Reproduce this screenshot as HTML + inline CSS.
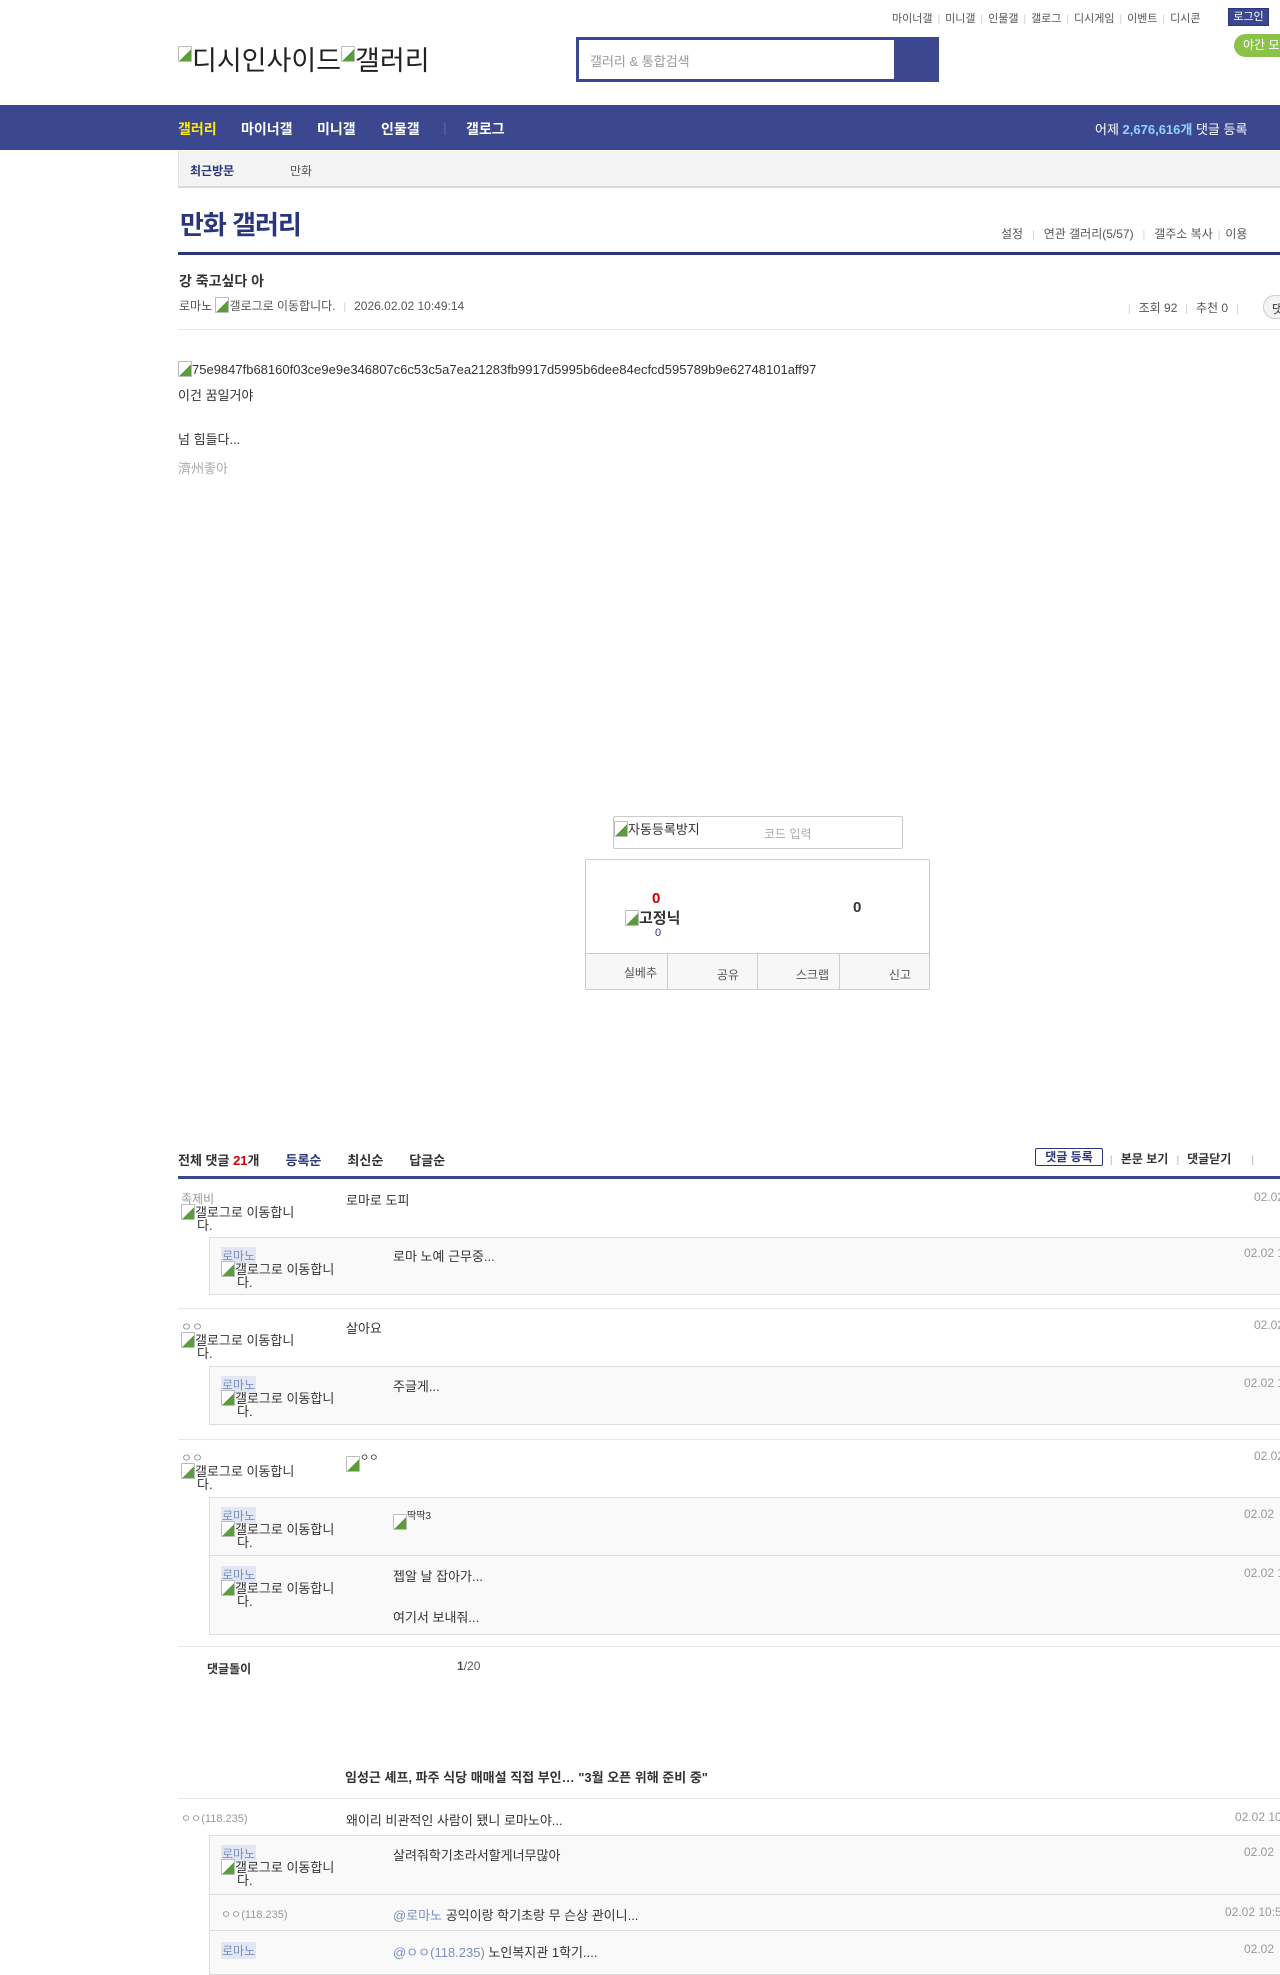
<!DOCTYPE html>
<html><head><meta charset="utf-8"><style>
*{margin:0;padding:0;box-sizing:border-box}
body{width:1280px;height:1958px;overflow:hidden;background:#fff;font-family:"Liberation Sans","Noto Sans CJK KR",sans-serif;font-size:13px;color:#333;position:relative}
.a{position:absolute;white-space:nowrap}
.bi{display:inline-block;width:14px;height:16px;border:1px solid #bbb;border-radius:1px;vertical-align:-3px;background:linear-gradient(135deg,#fff 55%,#5a9d3a 55%)}
.alt{position:absolute;width:130px;white-space:normal;font-size:13px;line-height:12px;color:#333}
.nk{font-size:12px;color:#999}
.nkr{font-size:12px;color:#7b8fbf;background:#e3e7f4;padding:0 1px}
.dt{font-size:12px;color:#999}
.box{position:absolute;left:209px;width:1100px;background:#f9f9f9;border:1px solid #ddd}
.hl{position:absolute;left:178px;width:1110px;height:1px;background:#e6e6e6}
.sep{color:#ccc;margin:0 5px;font-size:10px}
.nv{position:absolute;top:119px;font-size:14px;font-weight:bold;color:#fff;white-space:nowrap}
</style></head><body>

<div class="a" style="left:892px;top:10px;font-size:11px;color:#555">마이너갤<span class="sep">|</span>미니갤<span class="sep">|</span>인물갤<span class="sep">|</span>갤로그<span class="sep">|</span>디시게임<span class="sep">|</span>이벤트<span class="sep">|</span>디시콘</div>
<div class="a" style="left:1228px;top:8px;width:41px;height:18px;background:#3b4890;border:1px solid #29367c;color:#fff;font-size:11px;text-align:center;line-height:16px">로그인</div>
<div class="a" style="left:1234px;top:34px;width:60px;height:23px;background:#8bc34a;border-radius:12px;color:#fff;font-size:12px;line-height:23px;padding-left:9px">야간 모드</div>

<div class="a" style="left:178px;top:39px;font-size:27px;color:#222;letter-spacing:0"><span class="bi" style="vertical-align:8px"></span>디시인사이드<span class="bi" style="vertical-align:8px"></span>갤러리</div>

<div class="a" style="left:576px;top:37px;width:363px;height:45px;background:#3b4890"></div>
<div class="a" style="left:579px;top:40px;width:315px;height:39px;background:#fff"></div>
<div class="a" style="left:590px;top:51px;font-size:13px;color:#999">갤러리 &amp; 통합검색</div>

<div class="a" style="left:0;top:105px;width:1280px;height:45px;background:#3b4890"></div>
<div class="nv" style="left:178px;color:#ffea00">갤러리</div>
<div class="nv" style="left:241px">마이너갤</div>
<div class="nv" style="left:317px">미니갤</div>
<div class="nv" style="left:381px">인물갤</div>
<div class="nv" style="left:443px;color:#5a66a8;font-weight:normal">|</div>
<div class="nv" style="left:466px">갤로그</div>
<div class="a" style="left:1095px;top:119px;font-size:13px;color:#fff">어제 <b style="color:#8fd3fe">2,676,616개</b> 댓글 등록</div>

<div class="a" style="left:178px;top:151px;width:1110px;height:37px;background:#f3f3f3;border-left:1px solid #e4e4e4;border-bottom:2px solid #d9d9d9"></div>
<div class="a" style="left:190px;top:162px;font-size:12px;font-weight:bold;color:#29367c">최근방문</div>
<div class="a" style="left:290px;top:162px;font-size:12px;color:#555">만화</div>

<div class="a" style="left:180px;top:205px;font-size:26px;color:#29367c;font-weight:bold;letter-spacing:-1px">만화 갤러리</div>
<div class="a" style="left:1001px;top:225px;font-size:12px;color:#555">설정<span class="sep" style="margin:0 9px">|</span>연관 갤러리(5/57)<span class="sep" style="margin:0 9px">|</span>갤주소 복사<span class="sep">|</span>이용</div>
<div class="a" style="left:178px;top:252px;width:1110px;height:3px;background:#29367c"></div>

<div class="a" style="left:179px;top:271px;font-size:14px;font-weight:bold;color:#333">강 죽고싶다 아</div>
<div class="a" style="left:179px;top:297px;font-size:12px;color:#555">로마노 <span class="bi"></span>갤로그로 이동합니다.<span class="sep" style="margin:0 8px">|</span>2026.02.02 10:49:14</div>
<div class="a" style="left:1128px;top:299px;font-size:12px;color:#555"><span class="sep" style="margin:0 8px 0 0">|</span>조회 92<span class="sep" style="margin:0 8px">|</span>추천 0<span class="sep" style="margin:0 8px">|</span></div>
<div class="a" style="left:1263px;top:295px;width:40px;height:24px;border:1px solid #ccc;border-radius:12px;background:#f3f3f3;font-size:12px;padding:4px 8px">댓글</div>
<div class="hl" style="top:329px"></div>

<div class="a" style="left:178px;top:361px;font-size:13px;color:#333"><span class="bi"></span>75e9847fb68160f03ce9e9e346807c6c53c5a7ea21283fb9917d5995b6dee84ecfcd595789b9e62748101aff97</div>
<div class="a" style="left:178px;top:385px">이건 꿈일거야</div>
<div class="a" style="left:178px;top:429px">넘 힘들다...</div>
<div class="a" style="left:178px;top:458px;color:#aaa">濟州좋아</div>

<div class="a" style="left:613px;top:816px;width:290px;height:33px;border:1px solid #ccc;border-radius:2px"></div>
<div class="a" style="left:614px;top:819px;font-size:13px"><span class="bi"></span>자동등록방지</div>
<div class="a" style="left:764px;top:825px;font-size:12px;color:#aaa">코드 입력</div>

<div class="a" style="left:585px;top:859px;width:345px;height:131px;border:1px solid #ccc;border-radius:2px"></div>
<div class="a" style="left:652px;top:890px;font-size:15px;font-weight:bold;color:#c00">0</div>
<div class="a" style="left:625px;top:907px;font-size:15px;font-weight:bold;color:#333"><span class="bi"></span>고정닉</div>
<div class="a" style="left:655px;top:927px;font-size:11px;color:#29367c">0</div>
<div class="a" style="left:853px;top:899px;font-size:15px;font-weight:bold;color:#333">0</div>
<div class="a" style="left:586px;top:953px;width:343px;height:36px;background:#f7f7f7;border-top:1px solid #ccc;display:flex">
<div style="flex:1;border-right:1px solid #ccc;font-size:12px;text-align:right;padding:10px 10px 0 0;color:#555">실베추</div>
<div style="flex:1;border-right:1px solid #ccc;font-size:12px;text-align:right;padding:12px 18px 0 0;color:#555">공유</div>
<div style="flex:1;border-right:1px solid #ccc;font-size:12px;text-align:right;padding:12px 10px 0 0;color:#555">스크랩</div>
<div style="flex:1;font-size:12px;text-align:right;padding:12px 18px 0 0;color:#555">신고</div>
</div>

<div class="a" style="left:178px;top:1150px;font-size:13px;font-weight:bold;color:#333">전체 댓글 <span style="color:#c00">21</span>개<span style="color:#29367c;margin-left:26px">등록순</span><span style="margin-left:26px">최신순</span><span style="margin-left:26px">답글순</span></div>
<div class="a" style="left:1035px;top:1148px;width:68px;height:18px;border:1px solid #29367c;border-radius:2px;font-size:12px;font-weight:bold;color:#29367c;text-align:center;line-height:16px">댓글 등록</div>
<div class="a" style="left:1110px;top:1150px;font-size:12px;font-weight:bold;color:#333"><span class="sep" style="margin:0 8px 0 0">|</span>본문 보기<span class="sep" style="margin:0 8px">|</span>댓글닫기<span class="sep" style="margin:0 0 0 20px">|</span></div>
<div class="a" style="left:178px;top:1176px;width:1110px;height:3px;background:#3b4890"></div>

<div class="a nk" style="left:181px;top:1190px">족제비</div>
<div class="alt" style="left:181px;top:1204px"><span class="bi"></span>갤로그로 이동합니<br><span style="padding-left:16px">다.</span></div>
<div class="a" style="left:346px;top:1190px">로마로 도피</div>
<div class="a dt" style="left:1254px;top:1190px">02.02</div>
<div class="box" style="top:1237px;height:58px"></div>
<div class="a nkr" style="left:221px;top:1247px">로마노</div>
<div class="alt" style="left:221px;top:1261px"><span class="bi"></span>갤로그로 이동합니<br><span style="padding-left:16px">다.</span></div>
<div class="a" style="left:393px;top:1246px">로마 노예 근무중...</div>
<div class="a dt" style="left:1244px;top:1246px">02.02 1</div>
<div class="hl" style="top:1308px"></div>

<div class="a nk" style="left:181px;top:1318px">ㅇㅇ</div>
<div class="alt" style="left:181px;top:1332px"><span class="bi"></span>갤로그로 이동합니<br><span style="padding-left:16px">다.</span></div>
<div class="a" style="left:346px;top:1318px">살아요</div>
<div class="a dt" style="left:1254px;top:1318px">02.02</div>
<div class="box" style="top:1366px;height:59px"></div>
<div class="a nkr" style="left:221px;top:1376px">로마노</div>
<div class="alt" style="left:221px;top:1390px"><span class="bi"></span>갤로그로 이동합니<br><span style="padding-left:16px">다.</span></div>
<div class="a" style="left:393px;top:1376px">주글게...</div>
<div class="a dt" style="left:1244px;top:1376px">02.02 1</div>
<div class="hl" style="top:1439px"></div>

<div class="a nk" style="left:181px;top:1449px">ㅇㅇ</div>
<div class="alt" style="left:181px;top:1463px"><span class="bi"></span>갤로그로 이동합니<br><span style="padding-left:16px">다.</span></div>
<div class="a" style="left:346px;top:1449px"><span class="bi"></span><span style="font-size:10px;vertical-align:8px">ㅇㅇ</span></div>
<div class="a dt" style="left:1254px;top:1449px">02.02</div>
<div class="box" style="top:1497px;height:138px"></div>
<div class="a nkr" style="left:221px;top:1507px">로마노</div>
<div class="alt" style="left:221px;top:1521px"><span class="bi"></span>갤로그로 이동합니<br><span style="padding-left:16px">다.</span></div>
<div class="a" style="left:393px;top:1507px"><span class="bi"></span><span style="font-size:10px;vertical-align:8px">딱딱3</span></div>
<div class="a dt" style="left:1244px;top:1507px">02.02</div>
<div class="a" style="left:210px;top:1555px;width:1090px;height:1px;background:#ddd"></div>
<div class="a nkr" style="left:221px;top:1566px">로마노</div>
<div class="alt" style="left:221px;top:1580px"><span class="bi"></span>갤로그로 이동합니<br><span style="padding-left:16px">다.</span></div>
<div class="a" style="left:393px;top:1566px">젭알 날 잡아가...</div>
<div class="a" style="left:393px;top:1607px">여기서 보내줘...</div>
<div class="a dt" style="left:1244px;top:1566px">02.02 1</div>
<div class="hl" style="top:1646px"></div>

<div class="a" style="left:207px;top:1660px;font-size:12px;font-weight:bold;color:#333">댓글돌이</div>
<div class="a" style="left:457px;top:1659px;font-size:12px;color:#555"><b>1</b>/20</div>

<div class="a" style="left:345px;top:1767px;font-size:13px;font-weight:bold;color:#333">임성근 셰프, 파주 식당 매매설 직접 부인… "3월 오픈 위해 준비 중"</div>
<div class="hl" style="top:1798px"></div>

<div class="a nk" style="left:181px;top:1810px;font-size:11px">ㅇㅇ(118.235)</div>
<div class="a" style="left:346px;top:1810px">왜이리 비관적인 사람이 됐니 로마노야...</div>
<div class="a dt" style="left:1235px;top:1810px">02.02 10</div>
<div class="box" style="top:1835px;height:140px"></div>
<div class="a nkr" style="left:221px;top:1845px">로마노</div>
<div class="alt" style="left:221px;top:1859px"><span class="bi"></span>갤로그로 이동합니<br><span style="padding-left:16px">다.</span></div>
<div class="a" style="left:393px;top:1845px">살려줘학기초라서할게너무많아</div>
<div class="a dt" style="left:1244px;top:1845px">02.02</div>
<div class="a" style="left:210px;top:1894px;width:1090px;height:1px;background:#ddd"></div>
<div class="a nk" style="left:221px;top:1906px;font-size:11px">ㅇㅇ(118.235)</div>
<div class="a" style="left:393px;top:1905px"><span style="color:#7b8fbf">@로마노</span> 공익이랑 학기초랑 무 슨상 관이니...</div>
<div class="a dt" style="left:1225px;top:1905px">02.02 10:5</div>
<div class="a" style="left:210px;top:1930px;width:1090px;height:1px;background:#ddd"></div>
<div class="a nkr" style="left:221px;top:1942px">로마노</div>
<div class="a" style="left:393px;top:1942px"><span style="color:#7b8fbf">@ㅇㅇ(118.235)</span> 노인복지관 1학기....</div>
<div class="a dt" style="left:1244px;top:1942px">02.02</div>

</body></html>
